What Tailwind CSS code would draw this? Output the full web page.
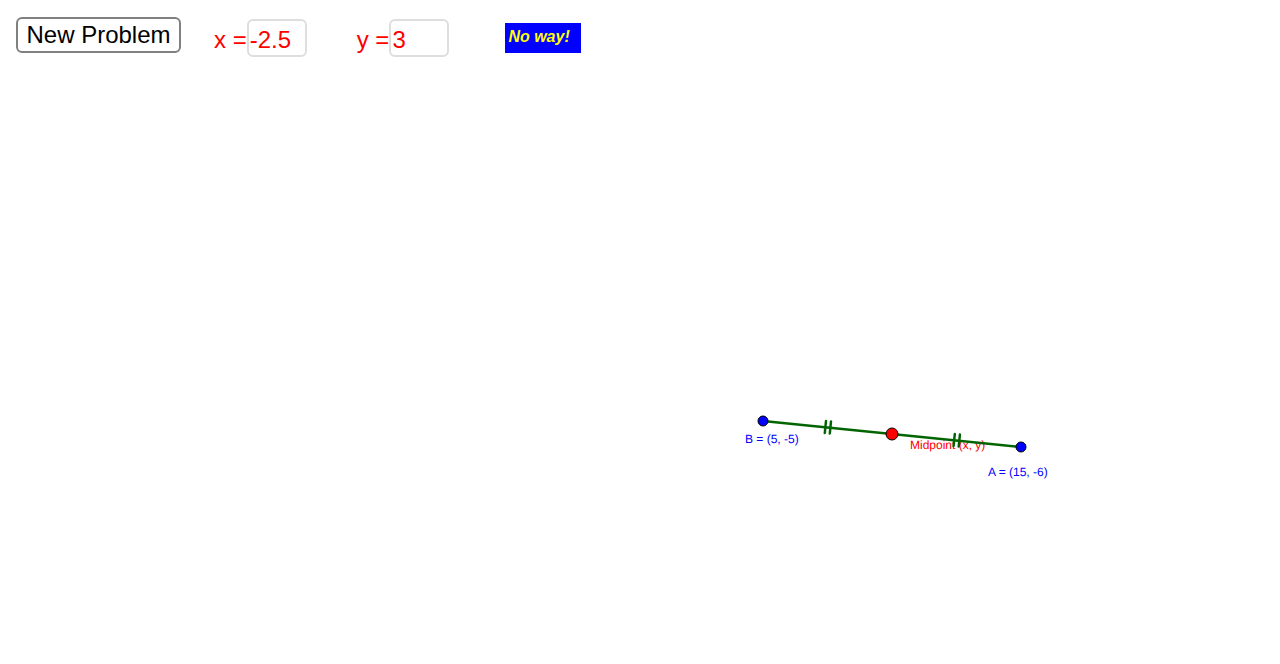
<!DOCTYPE html>
<html lang="en">
<head>
    <meta charset="UTF-8">
    <meta name="viewport" content="width=device-width, initial-scale=1.0">
    <title>Midpoint Practice</title>
    <script src="https://cdn.jsdelivr.net/npm/@tailwindcss/browser@4"></script>
</head>
<body class="flex min-h-screen flex-col bg-white font-['Liberation_Sans',Arial,sans-serif]">
    <!-- Controls -->
    <form class="flex h-[72px] items-start pl-4 pt-[17px] text-2xl" onsubmit="return false">
        <button type="button" class="h-9 w-[165px] rounded-md border-2 border-[#808080] bg-white text-black">New Problem</button>
        <div class="ml-[33px] mt-[2px] flex items-center text-[#ff0000]">
            <label for="x" class="whitespace-pre pt-1">x =</label>
            <input type="text" id="x" value="-2.5" class="h-[38px] w-[60px] rounded-md border-2 border-[#dedede] pl-px pt-1 outline-none">
        </div>
        <div class="ml-[50px] mt-[2px] flex items-center text-[#ff0000]">
            <label for="y" class="whitespace-pre pt-1">y =</label>
            <input type="text" id="y" value="3" class="h-[38px] w-[60px] rounded-md border-2 border-[#dedede] pl-px pt-1 outline-none">
        </div>
        <output for="x y" class="ml-14 mt-[6px] h-[30px] w-[76px] whitespace-nowrap bg-[#0000ff] pl-[3px] pt-[2px] text-base font-bold italic text-[#ffff00]">No way!</output>
    </form>

    <!-- Drawing plane -->
    <main class="flex grow flex-col overflow-hidden">
        <svg class="w-full grow text-xs [text-rendering:geometricPrecision]" role="img" aria-label="Segment AB with its midpoint">
            <text x="910" y="377" fill="#ff0000">Midpoint (x, y)</text>
            <g stroke="#006400" stroke-width="2.5" stroke-linecap="round">
                <line x1="763" y1="349" x2="1021" y2="375"/>
                <!-- equal length marks -->
                <path d="M826 349l-1.2 12M831 349.500l-1.200 12M954.800 362l-1.200 12M959.900 362.500l-1.200 12"/>
            </g>
            <g stroke="#000000">
                <circle cx="763" cy="349" r="5" fill="#0000ff"/>
                <circle cx="1021" cy="375" r="5" fill="#0000ff"/>
                <circle cx="892" cy="362" r="6" fill="#ff0000"/>
            </g>
            <g fill="#0000ff">
                <text x="745" y="371">B = (5, -5)</text>
                <text x="988" y="404">A = (15, -6)</text>
            </g>
        </svg>
    </main>
</body>
</html>
